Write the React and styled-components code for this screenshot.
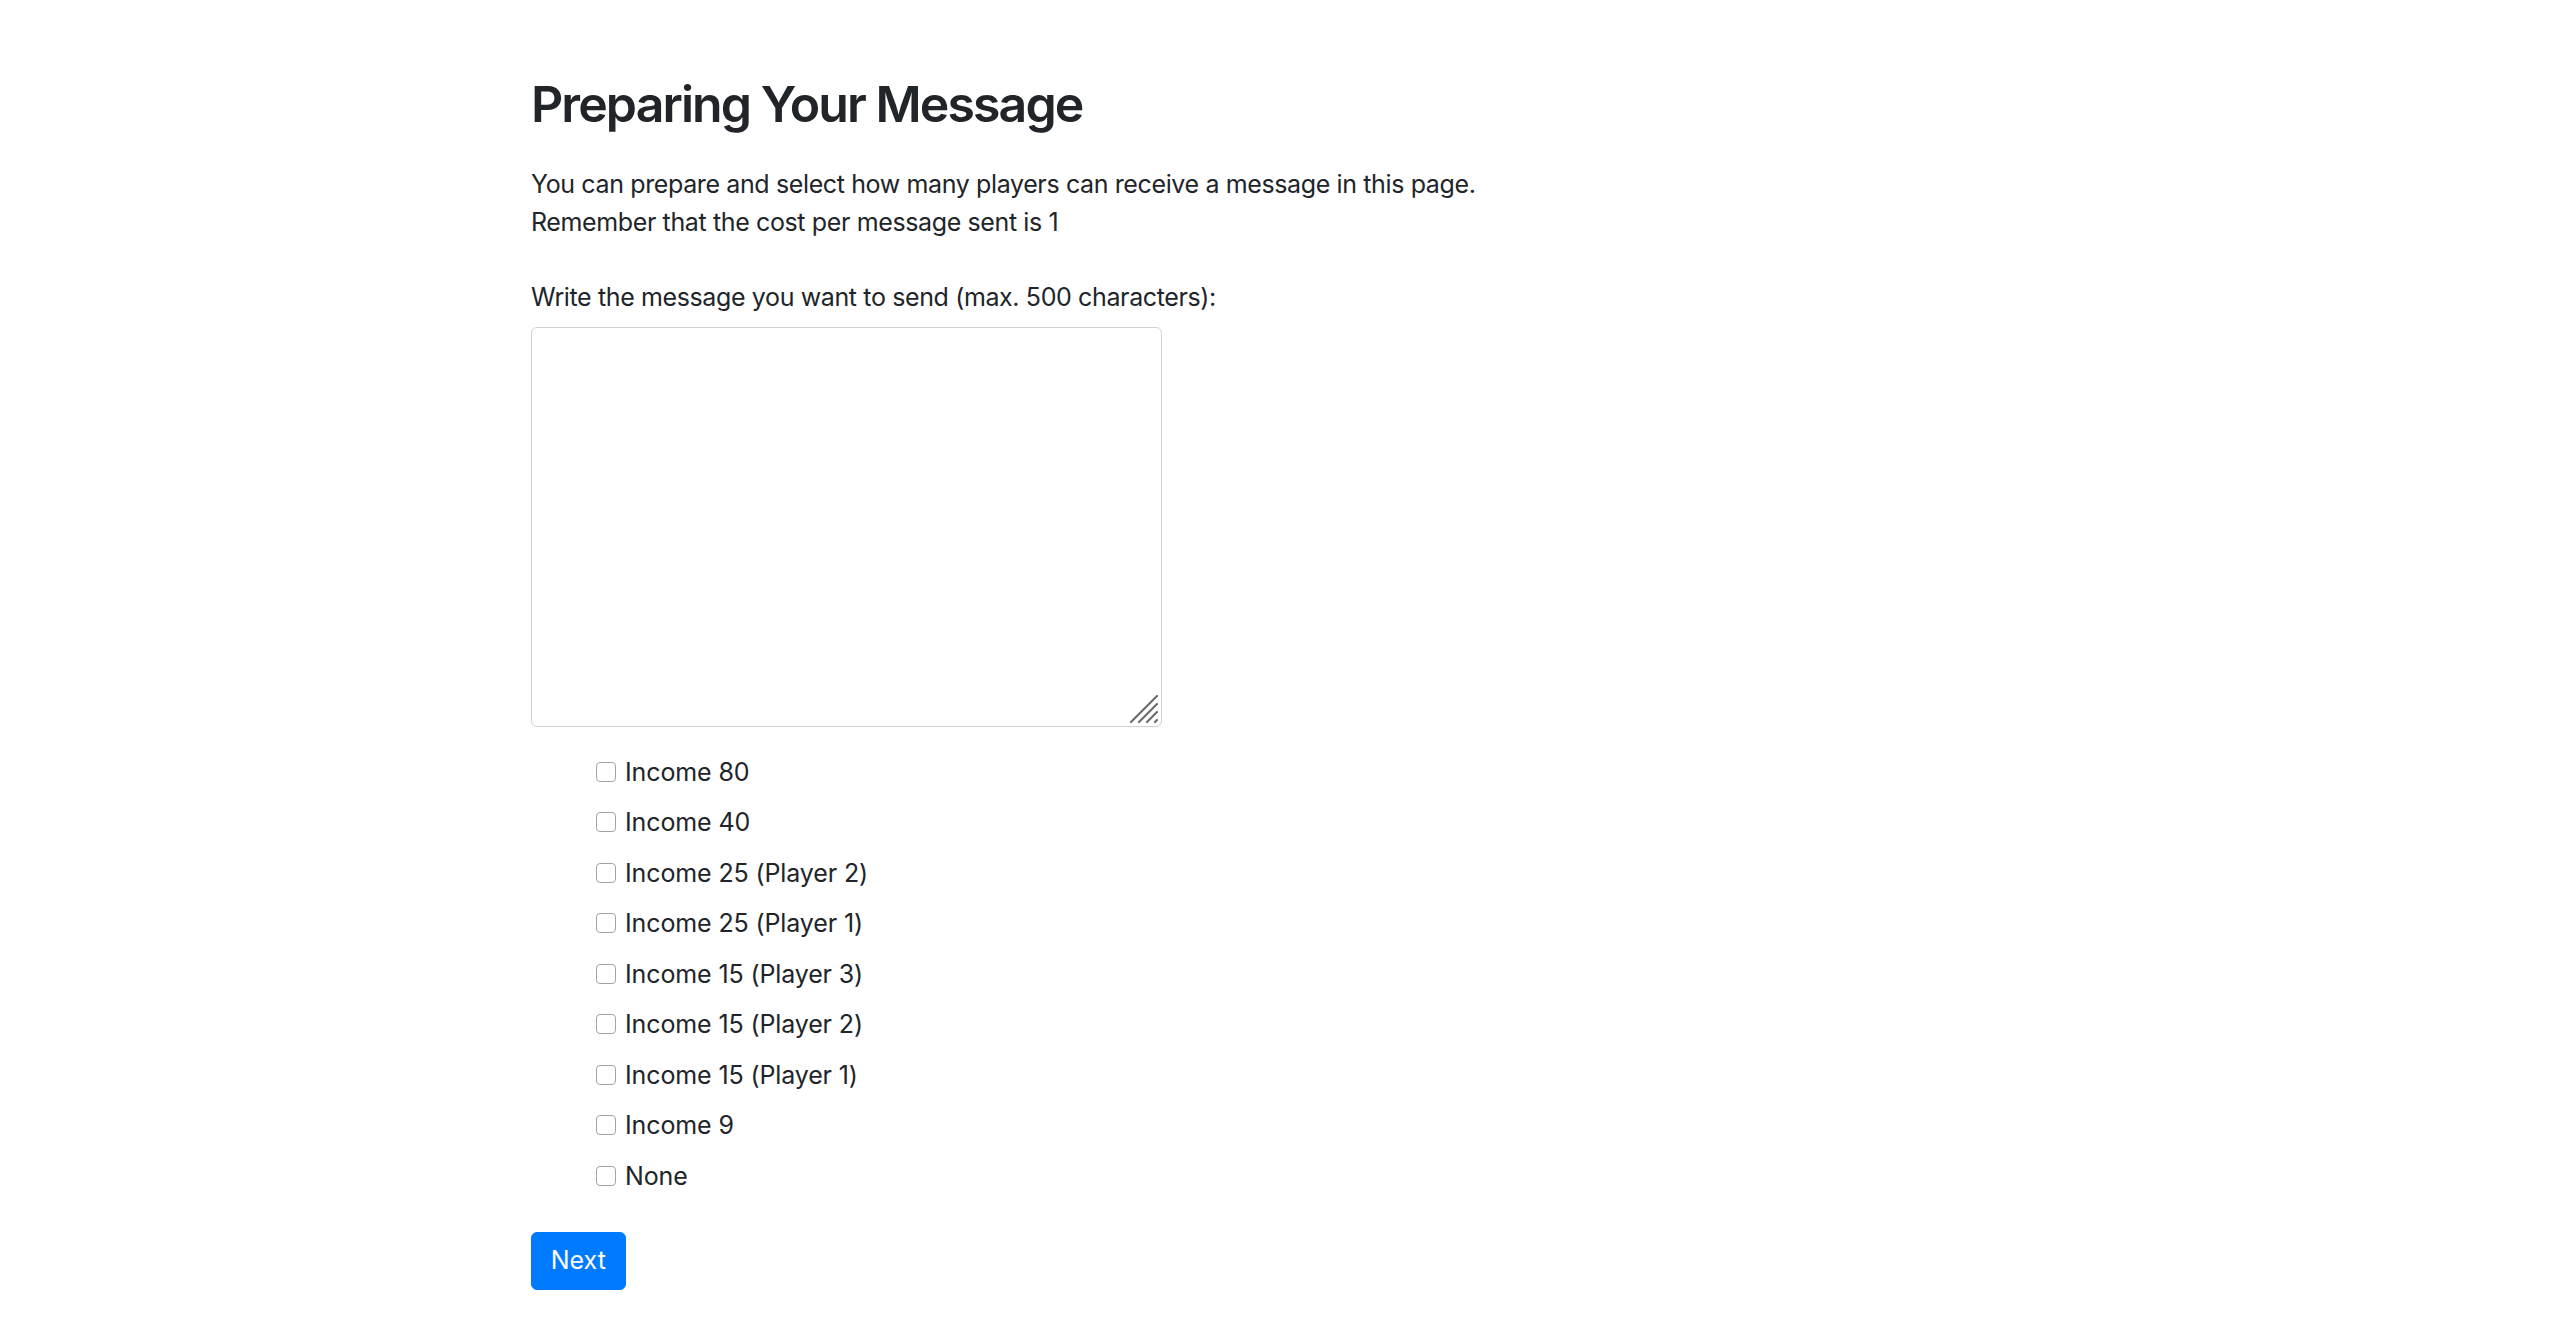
import React from "react";
import styled, { createGlobalStyle } from "styled-components";

const GlobalStyle = createGlobalStyle`
  html, body {
    margin: 0;
    padding: 0;
    background: #fff;
  }
  body {
    font-family: Inter, "Noto Sans", "Liberation Sans", sans-serif;
    font-size: 25px;
    line-height: 1.5;
    letter-spacing: -0.015em;
    color: #212529;
  }
`;

const Container = styled.main`
  width: 1492px;
  margin: 0 auto;
  padding-top: 74px;
  padding-bottom: 40px;
`;

const Title = styled.h2`
  margin: 0 0 32px;
  font-size: 50px;
  font-weight: 600;
  line-height: 1.2;
  letter-spacing: -0.038em;
`;

const Intro = styled.p`
  margin: 0 0 38px;
`;

const Form = styled.form`
  display: flex;
  flex-direction: column;
  align-items: flex-start;
`;

const Label = styled.label`
  display: block;
  margin-bottom: 10px;
`;

const Field = styled.div`
  position: relative;
  width: 631px;
  height: 400px;
`;

const MessageBox = styled.textarea`
  box-sizing: border-box;
  display: block;
  width: 100%;
  height: 100%;
  padding: 8px 12px;
  border: 1.5px solid #d0d4d9;
  border-radius: 6px;
  font: inherit;
  color: inherit;
  resize: none;
  outline: none;
`;

const Grip = styled.svg`
  position: absolute;
  right: 3px;
  bottom: 3px;
  width: 30px;
  height: 30px;
  pointer-events: none;
`;

const OptionList = styled.div`
  display: flex;
  flex-direction: column;
  gap: 13px;
  margin: 27px 0 37px;
  padding-left: 65px;
`;

const Option = styled.label`
  display: flex;
  align-items: flex-start;
  gap: 9px;
  line-height: 37.5px;
  letter-spacing: -0.005em;
`;

const Check = styled.input.attrs({ type: "checkbox" })`
  appearance: none;
  box-sizing: border-box;
  width: 20px;
  height: 20px;
  margin: 8px 0 0;
  border: 1.5px solid #a3a3a3;
  border-radius: 4px;
  background: #fff;
  flex-shrink: 0;

  &:checked {
    background: #007bff;
    border-color: #007bff;
  }
`;

const Button = styled.button`
  padding: 9.4px 18.75px;
  border: 1.5px solid #007bff;
  border-radius: 6px;
  background: #007bff;
  color: #fff;
  font: inherit;
  line-height: 37.5px;
  cursor: pointer;
`;

const options = [
  "Income 80",
  "Income 40",
  "Income 25 (Player 2)",
  "Income 25 (Player 1)",
  "Income 15 (Player 3)",
  "Income 15 (Player 2)",
  "Income 15 (Player 1)",
  "Income 9",
  "None",
];

export default function App() {
  return (
    <>
      <GlobalStyle />
      <Container>
        <Title>Preparing Your Message</Title>
        <Intro>
          You can prepare and select how many players can receive a message in this page.
          <br />
          Remember that the cost per message sent is 1
        </Intro>
        <Form onSubmit={(e) => e.preventDefault()}>
          <Label htmlFor="message">Write the message you want to send (max. 500 characters):</Label>
          <Field>
            <MessageBox id="message" name="message" maxLength={500} />
            <Grip viewBox="0 0 30 30">
              <g stroke="#6b6b6b" strokeWidth="2.2" strokeLinecap="round">
                <line x1="2" y1="28" x2="28" y2="2" />
                <line x1="10" y1="28" x2="28" y2="10" />
                <line x1="18" y1="28" x2="28" y2="18" />
                <line x1="26" y1="28" x2="28" y2="26" />
              </g>
            </Grip>
          </Field>
          <OptionList>
            {options.map((o) => (
              <Option key={o}>
                <Check name="recipients" value={o} />
                {o}
              </Option>
            ))}
          </OptionList>
          <Button type="submit">Next</Button>
        </Form>
      </Container>
    </>
  );
}
